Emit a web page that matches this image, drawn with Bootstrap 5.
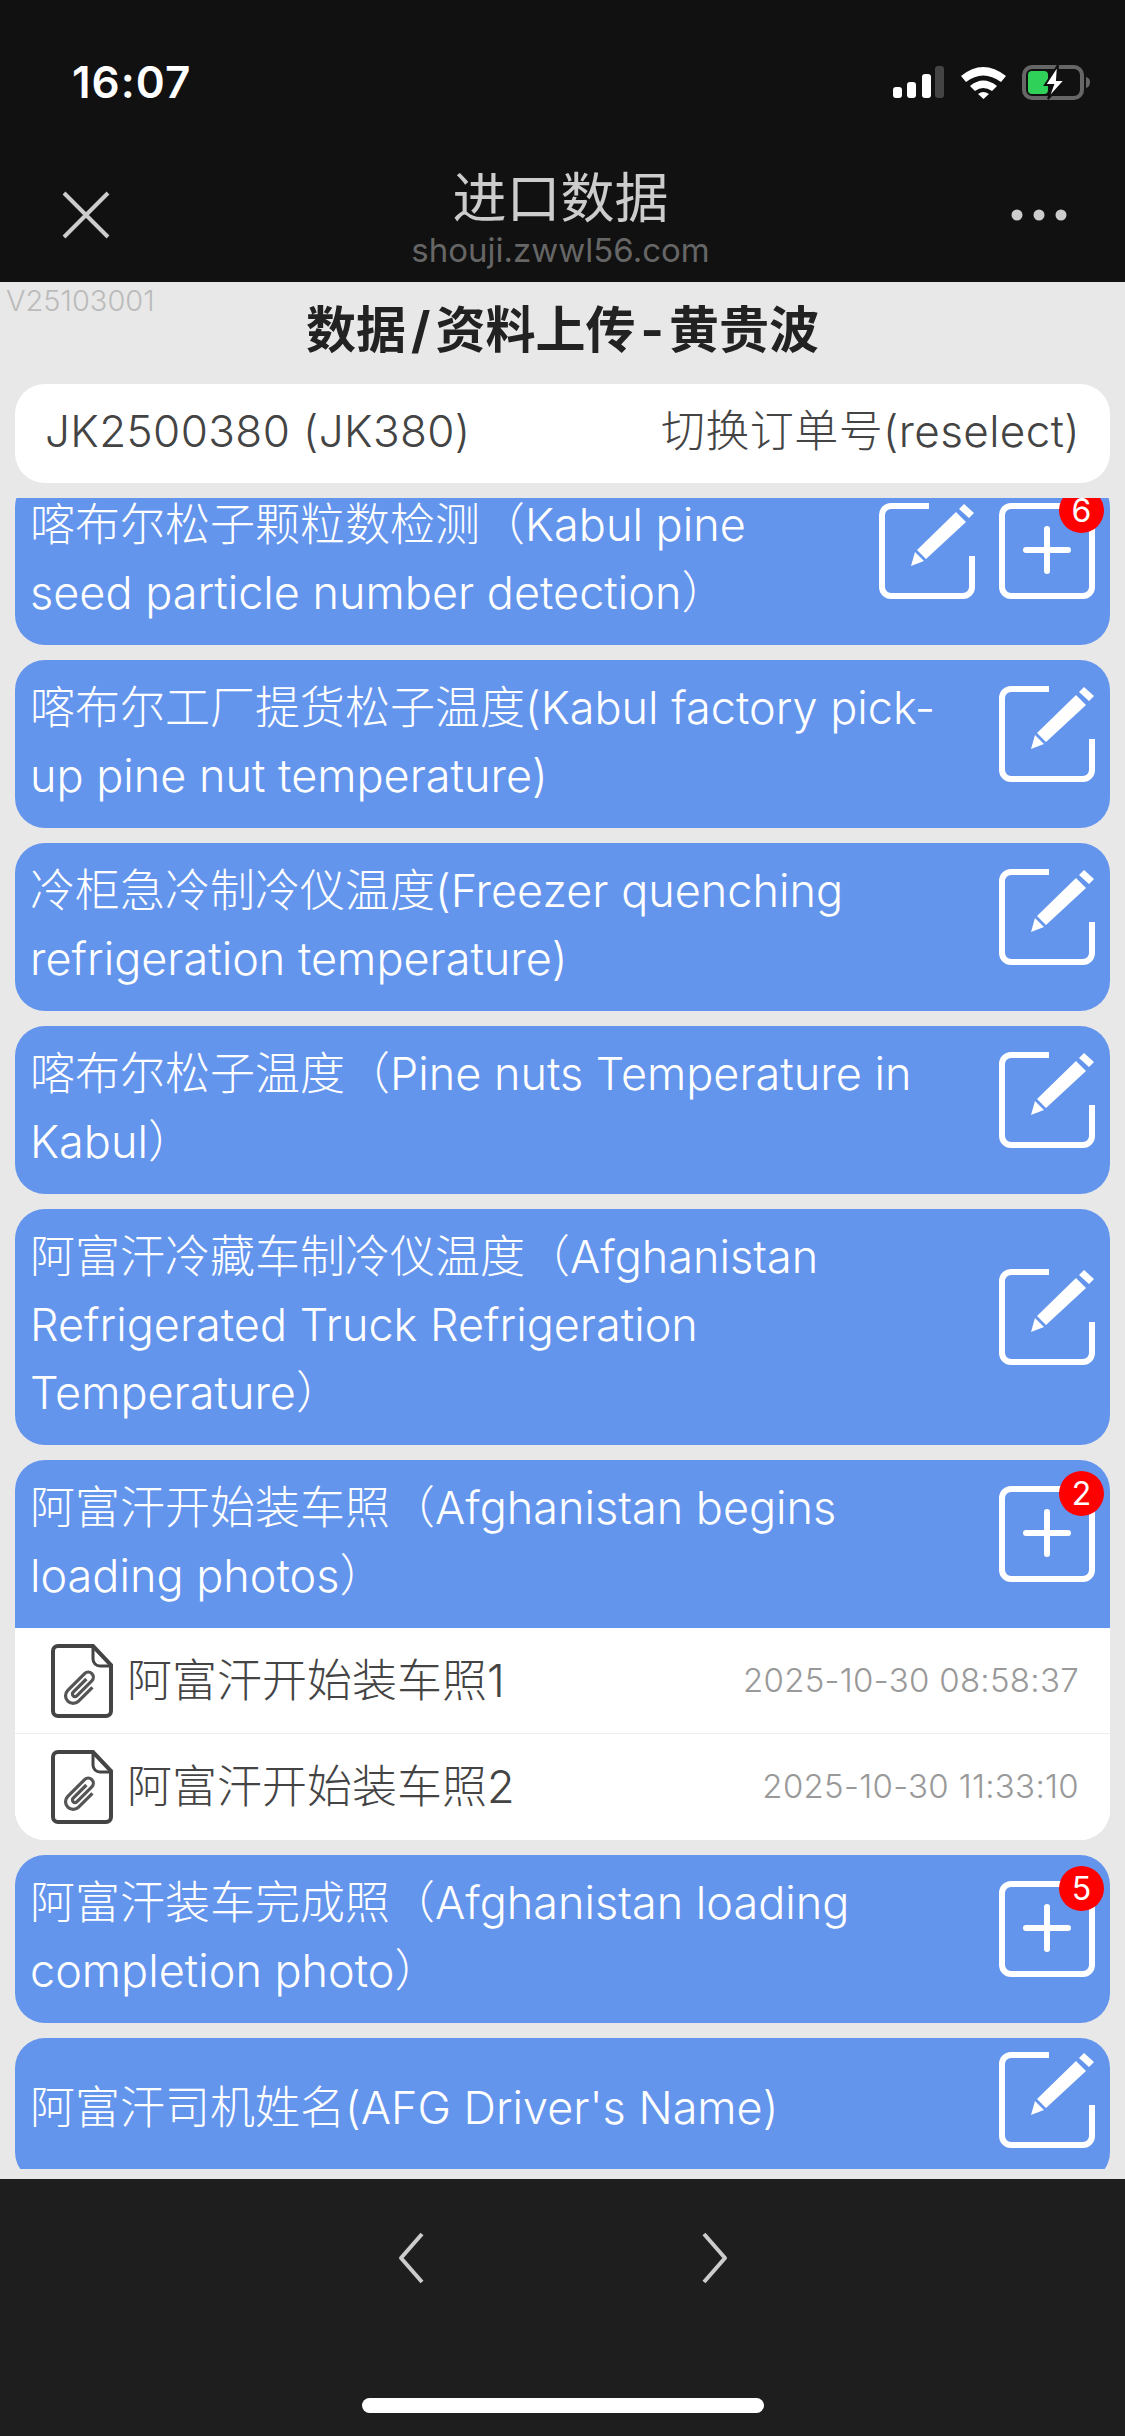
<!DOCTYPE html>
<html lang="zh-CN">
<head>
  <meta charset="UTF-8" />
  <title>进口数据</title>
  <link href="https://cdn.jsdelivr.net/npm/bootstrap@5.3.0/dist/css/bootstrap.min.css" rel="stylesheet"/>
  <style>
    body { width: 1125px; height: 2436px; overflow: hidden; background: #e8e8e8; font-family: "Inter", "Noto Sans CJK SC", sans-serif; font-weight: 300; color: #444; }
    .top-bar { height: 282px; background: #111; flex: none; }
    .status-row { height: 164px; padding: 0 34px 0 72px; }
    .status-time { font-size: 44px; font-weight: 600; color: #fff; line-height: 1; letter-spacing: 1px; }
    .status-icons svg { display: block; }
    .nav-row { height: 118px; padding: 0 58px 0 62px; }
    .nav-row > svg { margin-top: -16px; }
    .nav-title { font-size: 54px; font-weight: 400; line-height: 66px; color: #ccc; margin-top: -12px; }
    .nav-url { font-size: 33px; font-weight: 400; line-height: 36px; color: #666; }
    .version-tag { position: absolute; left: 6px; top: 286px; font-size: 29px; line-height: 30px; color: #bbb; }
    .page-title { font-size: 50px; font-weight: 700; line-height: 60px; color: #222; text-align: center; margin: 18px 0 0; height: 84px; }
    .title-sep { margin: 0 5px; }
    .order-box { margin: 0 15px; height: 99px; background: #fff; border-radius: 30px; padding: 0 30px 6px; font-size: 44px; letter-spacing: .4px; color: #444; flex: none; }
    .scroll-box { margin: 15px 15px 10px; height: 1671px; overflow: hidden; flex: none; }
    .scroll-inner { margin-top: -21px; display: flex; flex-direction: column; gap: 15px; }
    .data-item { border-radius: 30px; overflow: hidden; background: #fff; }
    .item-head { background: #6495ed; color: #fff; padding: 14px 15px 18px 15px; font-size: 45px; line-height: 68px; }
    .item-actions { padding-bottom: 16px; gap: 24px; flex: none; }
    .icon-wrap { width: 96px; height: 96px; position: relative; }
    .icon-wrap svg { display: block; }
    .count-dot { position: absolute; top: -15px; right: -9px; width: 45px; height: 45px; background: #f00; color: #fff; font-size: 32px; font-weight: 400; line-height: 45px; text-align: center; border-radius: 50%; }
    .file-row.list-group-item { height: 106px; padding: 0 31px 0 36px; border-color: #eee; color: #444; font-size: 45px; background: #fff; }
    .file-row .when { font-size: 33px; letter-spacing: .3px; color: #999; }
    .file-row svg { margin-right: 14px; flex: none; }
    .bottom-bar { flex: 1; background: #1e1e1e; position: relative; padding-top: 53px; gap: 278px; }
    .home-pill { position: absolute; left: 362px; top: 219px; width: 402px; height: 15px; background: #fff; border-radius: 8px; }
  </style>
</head>
<body class="d-flex flex-column position-relative">

  <svg width="0" height="0" class="position-absolute">
    <symbol id="editIcon" viewBox="0 0 96 96">
      <path d="M50 3H12A9 9 0 0 0 3 12V84A9 9 0 0 0 12 93H84A9 9 0 0 0 93 84V53" fill="none" stroke="#fff" stroke-width="6"/>
      <path d="M32 63L36 49L45 58Z M38 47L77 9L87 19L47 56Z M80 6L85 1L95 10L90 15Z" fill="#fff"/>
    </symbol>
    <symbol id="plusIcon" viewBox="0 0 96 96">
      <rect x="3" y="3" width="90" height="90" rx="9" fill="none" stroke="#fff" stroke-width="6"/>
      <path d="M27 47H69M48 26V68" fill="none" stroke="#fff" stroke-width="6" stroke-linecap="round"/>
    </symbol>
    <symbol id="fileIcon" viewBox="0 0 62 74">
      <path d="M7 2H42L60 21V67A5 5 0 0 1 55 72H7A5 5 0 0 1 2 67V7A5 5 0 0 1 7 2Z" fill="none" stroke="#444" stroke-width="4"/>
      <path d="M42 3V15A7 7 0 0 0 49 22H59" fill="none" stroke="#444" stroke-width="3"/>
      <g transform="translate(30 44) rotate(45) scale(.85)" fill="none" stroke="#555" stroke-width="3.8">
        <path d="M-3-12V10A3 3 0 0 0 3 10V-15A6 6 0 0 0-9-15V13A9 9 0 0 0 9 13V-10"/>
      </g>
    </symbol>
  </svg>

  <header class="top-bar">
    <div class="status-row d-flex align-items-center justify-content-between">
      <span class="status-time">16:07</span>
      <div class="status-icons d-flex align-items-center">
        <svg width="198" height="36" viewBox="0 0 198 36">
          <rect x="0" y="23" width="9" height="11" rx="3" fill="#fff"/>
          <rect x="14" y="18" width="9" height="16" rx="3" fill="#fff"/>
          <rect x="29" y="10" width="9" height="24" rx="3" fill="#fff"/>
          <rect x="42" y="2" width="9" height="32" rx="3" fill="#444"/>
          <path d="M68 12Q90-6 113 12L108 18Q90 5 73 18Z M77 22Q90 11 104 22L99 27Q90 21 82 27Z M85 30Q90 26 96 30L90.500 35Z" fill="#fff"/>
          <rect x="131" y="3" width="58" height="31" rx="8" fill="none" stroke="#666" stroke-width="4"/>
          <path d="M193 13Q197 14 197 18Q197 23 193 24Z" fill="#666"/>
          <rect x="135" y="7" width="20" height="23" rx="4" fill="#30d158"/>
          <path d="M165 1L152 21H160L155 35L172 16H164Z" fill="#fff" stroke="#111" stroke-width="2"/>
        </svg>
      </div>
    </div>
    <div class="nav-row d-flex align-items-center justify-content-between">
      <svg width="48" height="48" viewBox="0 0 48 48"><path d="M2 2L46 46M46 2L2 46" stroke="#ccc" stroke-width="4"/></svg>
      <div class="text-center">
        <div class="nav-title">进口数据</div>
        <div class="nav-url">shouji.zwwl56.com</div>
      </div>
      <svg width="56" height="12" viewBox="0 0 56 12"><circle cx="6" cy="6" r="5.500" fill="#ccc"/><circle cx="28" cy="6" r="5.500" fill="#ccc"/><circle cx="50" cy="6" r="5.500" fill="#ccc"/></svg>
    </div>
  </header>

  <span class="version-tag">V25103001</span>
  <h1 class="page-title">数据<span class="title-sep">/</span>资料上传<span class="title-sep">-</span>黄贵波</h1>

  <div class="order-box d-flex align-items-center justify-content-between">
    <span>JK2500380 (JK380)</span>
    <span>切换订单号(reselect)</span>
  </div>

  <div class="scroll-box">
    <div class="scroll-inner">

      <div class="data-item">
        <div class="item-head d-flex align-items-center justify-content-between">
          <div>喀布尔松子颗粒数检测（Kabul pine<br>seed particle number detection）</div>
          <div class="item-actions d-flex">
            <div class="icon-wrap"><svg width="96" height="96"><use href="#editIcon"/></svg></div>
            <div class="icon-wrap"><svg width="96" height="96"><use href="#plusIcon"/></svg><span class="count-dot">6</span></div>
          </div>
        </div>
      </div>

      <div class="data-item">
        <div class="item-head d-flex align-items-center justify-content-between">
          <div>喀布尔工厂提货松子温度(Kabul factory pick-<br>up pine nut temperature)</div>
          <div class="item-actions d-flex"><div class="icon-wrap"><svg width="96" height="96"><use href="#editIcon"/></svg></div></div>
        </div>
      </div>

      <div class="data-item">
        <div class="item-head d-flex align-items-center justify-content-between">
          <div>冷柜急冷制冷仪温度(Freezer quenching<br>refrigeration temperature)</div>
          <div class="item-actions d-flex"><div class="icon-wrap"><svg width="96" height="96"><use href="#editIcon"/></svg></div></div>
        </div>
      </div>

      <div class="data-item">
        <div class="item-head d-flex align-items-center justify-content-between">
          <div>喀布尔松子温度（Pine nuts Temperature in<br>Kabul）</div>
          <div class="item-actions d-flex"><div class="icon-wrap"><svg width="96" height="96"><use href="#editIcon"/></svg></div></div>
        </div>
      </div>

      <div class="data-item">
        <div class="item-head d-flex align-items-center justify-content-between">
          <div>阿富汗冷藏车制冷仪温度（Afghanistan<br>Refrigerated Truck Refrigeration<br>Temperature）</div>
          <div class="item-actions d-flex"><div class="icon-wrap"><svg width="96" height="96"><use href="#editIcon"/></svg></div></div>
        </div>
      </div>

      <div class="data-item">
        <div class="item-head d-flex align-items-center justify-content-between">
          <div>阿富汗开始装车照（Afghanistan begins<br>loading photos）</div>
          <div class="item-actions d-flex"><div class="icon-wrap"><svg width="96" height="96"><use href="#plusIcon"/></svg><span class="count-dot">2</span></div></div>
        </div>
        <div class="list-group list-group-flush">
          <div class="list-group-item file-row d-flex align-items-center">
            <svg width="62" height="74"><use href="#fileIcon"/></svg>
            <span class="flex-grow-1">阿富汗开始装车照1</span>
            <span class="when">2025-10-30 08:58:37</span>
          </div>
          <div class="list-group-item file-row d-flex align-items-center">
            <svg width="62" height="74"><use href="#fileIcon"/></svg>
            <span class="flex-grow-1">阿富汗开始装车照2</span>
            <span class="when">2025-10-30 11:33:10</span>
          </div>
        </div>
      </div>

      <div class="data-item">
        <div class="item-head d-flex align-items-center justify-content-between">
          <div>阿富汗装车完成照（Afghanistan loading<br>completion photo）</div>
          <div class="item-actions d-flex"><div class="icon-wrap"><svg width="96" height="96"><use href="#plusIcon"/></svg><span class="count-dot">5</span></div></div>
        </div>
      </div>

      <div class="data-item">
        <div class="item-head d-flex align-items-center justify-content-between">
          <div>阿富汗司机姓名(AFG Driver's Name)</div>
          <div class="item-actions d-flex"><div class="icon-wrap"><svg width="96" height="96"><use href="#editIcon"/></svg></div></div>
        </div>
      </div>

    </div>
  </div>

  <footer class="bottom-bar d-flex justify-content-center align-items-start">
    <svg width="26" height="52" viewBox="0 0 26 52"><path d="M24 2L3 26L24 50" fill="none" stroke="#ccc" stroke-width="4" stroke-linejoin="round"/></svg>
    <svg width="26" height="52" viewBox="0 0 26 52"><path d="M2 2L23 26L2 50" fill="none" stroke="#ccc" stroke-width="4" stroke-linejoin="round"/></svg>
    <div class="home-pill"></div>
  </footer>

  <script src="https://cdn.jsdelivr.net/npm/bootstrap@5.3.0/dist/js/bootstrap.bundle.min.js"></script>
</body>
</html>
